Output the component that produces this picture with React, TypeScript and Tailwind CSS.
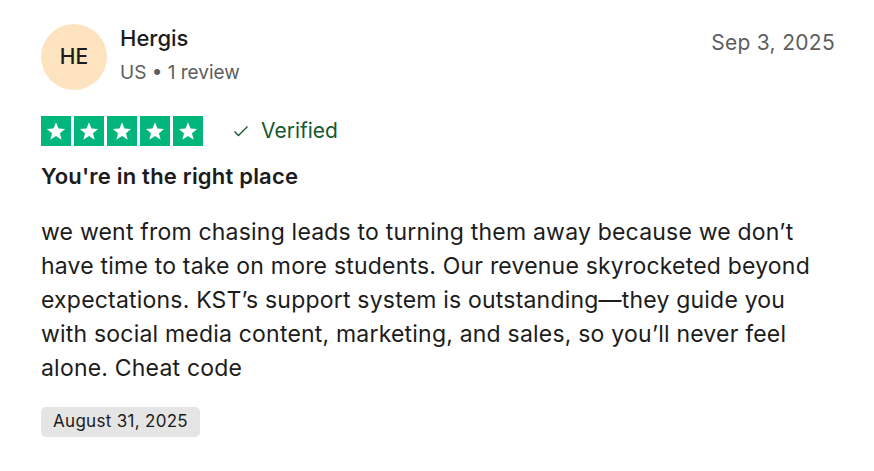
function Star() {
  return (
    <div className="flex h-[30px] w-[30px] items-center justify-center bg-[#00b67a]">
      <svg viewBox="0 0 24 24" className="h-[22px] w-[22px]" fill="#ffffff">
        <path d="M12 2.5l2.7 6.9 7.3.4-5.7 4.6 1.9 7.1L12 17.5l-6.2 4 1.9-7.1L2 9.8l7.3-.4z" />
      </svg>
    </div>
  );
}

export default function App() {
  return (
    <div
      className="min-h-screen bg-white pl-[41px] pr-[39px] pt-[24px] text-[#1c1c1c]"
      style={{ fontFamily: 'Inter, "Noto Sans", sans-serif' }}
    >
      <div className="flex items-start justify-between">
        <div className="flex items-center gap-[13px]">
          <div className="flex h-[66px] w-[66px] items-center justify-center rounded-full bg-[#fde3c0] text-[21px] font-medium text-[#1c1c1c]">
            HE
          </div>
          <div className="-mt-[5px] flex flex-col">
            <span className="text-[22px] font-medium leading-[28px]">Hergis</span>
            <span className="mt-[9px] text-[19px] leading-[24px] text-[#5e5e5e]">US • 1 review</span>
          </div>
        </div>
        <span className="pt-[3px] text-[21px] tracking-[0.3px] text-[#5e5e5e]">Sep 3, 2025</span>
      </div>

      <div className="mt-[25px] flex items-center">
        <div className="flex gap-[3px]">
          <Star />
          <Star />
          <Star />
          <Star />
          <Star />
        </div>
        <div className="ml-[29px] flex items-center gap-[11px] text-[#16582f]">
          <svg viewBox="0 0 16 16" className="h-[16px] w-[18px]" fill="none" stroke="currentColor" strokeWidth="1.4">
            <path d="M1.5 8.5l4 4 9-9" />
          </svg>
          <span className="text-[21px]">Verified</span>
        </div>
      </div>

      <h2 className="mt-[15px] text-[22px] font-semibold leading-[28px] tracking-[0.2px]">You're in the right place</h2>

      <p className="mt-[25px] max-w-[800px] text-[23px] leading-[34px] tracking-[0.2px] text-[#1c1c1c]">
        we went from chasing leads to turning them away because we don’t have time to take on more students. Our
        revenue skyrocketed beyond expectations. KST’s support system is outstanding—they guide you with social media
        content, marketing, and sales, so you’ll never feel alone. Cheat code
      </p>

      <div className="mt-[22px] inline-flex h-[30px] items-center rounded-[5px] bg-[#e5e5e5] px-[12px] text-[17px] tracking-[0.3px]">
        August 31, 2025
      </div>
    </div>
  );
}
